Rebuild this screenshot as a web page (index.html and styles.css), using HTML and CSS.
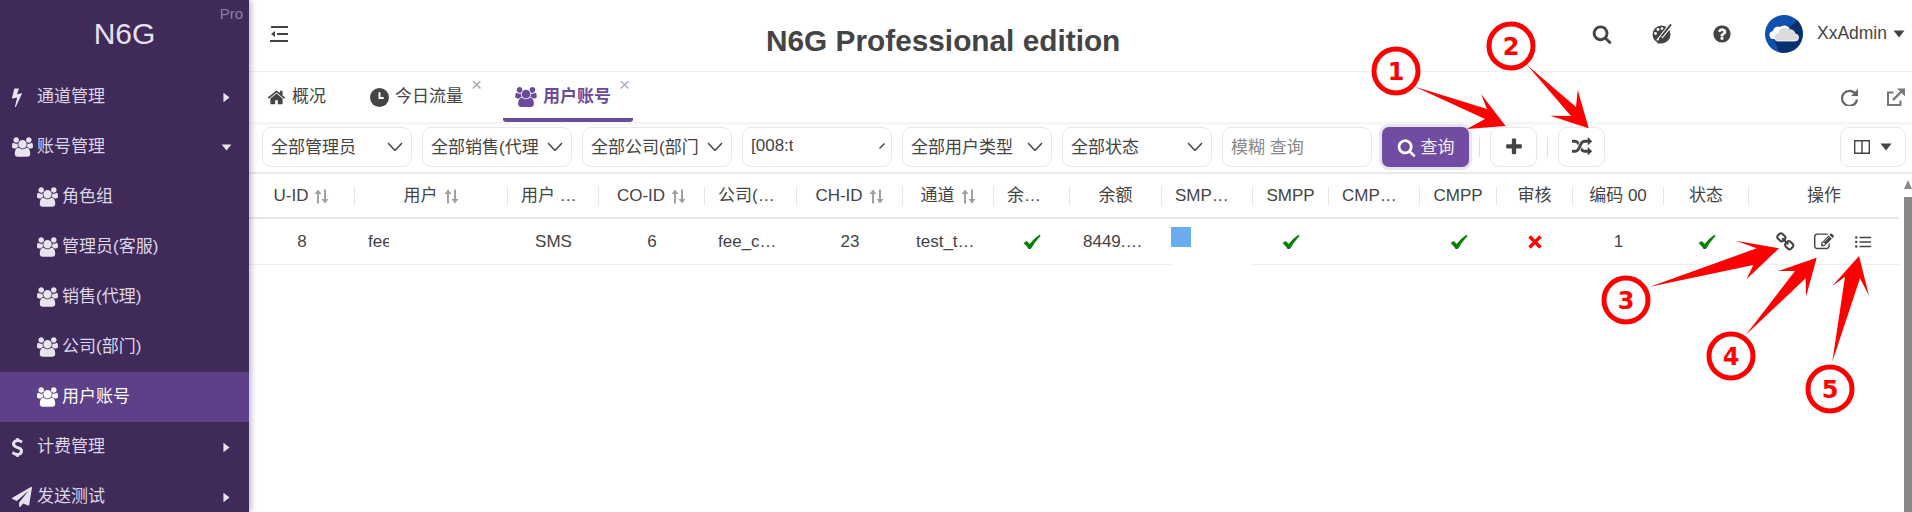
FILE: index.html
```html
<!DOCTYPE html>
<html lang="zh">
<head>
    <meta charset="utf-8" />
    <title>N6G Professional edition</title>
    <link rel="stylesheet" href="styles.css">
</head>
<body>
    <!--图标-->
    <svg class="defs" width="0" height="0">
        <symbol id="i-users" viewBox="0 0 1920 1792"><path d="M593 896q-162 5-265 128h-134q-82 0-138-40.5t-56-118.5q0-353 124-353 6 0 43.5 21t97.5 42.5 119 21.5q67 0 133-23-5 37-5 66 0 139 81 256zm1071 637q0 120-73 189.5t-194 69.5h-874q-121 0-194-69.5t-73-189.5q0-53 3.5-103.5t14-109 26.5-108.5 43-97.5 62-81 85.5-53.5 111.5-20q10 0 43 21.5t73 48 107 48 135 21.5 135-21.5 107-48 73-48 43-21.5q61 0 111.5 20t85.5 53.5 62 81 43 97.5 26.5 108.5 14 109 3.5 103.5zm-1024-1277q0 106-75 181t-181 75-181-75-75-181 75-181 181-75 181 75 75 181zm704 384q0 159-112.5 271.5t-271.5 112.5-271.5-112.5-112.5-271.5 112.5-271.5 271.5-112.5 271.5 112.5 112.5 271.5zm576 225q0 78-56 118.5t-138 40.5h-134q-103-123-265-128 81-117 81-256 0-29-5-66 66 23 133 23 59 0 119-21.5t97.5-42.5 43.5-21q124 0 124 353zm-128-609q0 106-75 181t-181 75-181-75-75-181 75-181 181-75 181 75 75 181z"/></symbol>
        <symbol id="i-check" viewBox="0 0 18 16"><path d="M0.5 9 L3.8 7 L6.6 10 Q11 4.5 16.4 0.8 L17.6 2 Q11.5 8 7.8 15 L5.6 15 Q3.5 11.5 0.5 9z"/></symbol>
        <symbol id="i-search" viewBox="0 0 1792 1792"><path d="M1216 832q0-185-131.5-316.5t-316.5-131.5-316.5 131.5-131.5 316.5 131.5 316.5 316.5 131.5 316.5-131.5 131.5-316.5zm512 832q0 52-38 90t-90 38q-54 0-90-38l-343-342q-179 124-399 124-143 0-273.5-55.5t-225-150-150-225-55.5-273.5 55.5-273.5 150-225 225-150 273.5-55.5 273.5 55.5 225 150 150 225 55.5 273.5q0 220-124 399l343 343q37 37 37 90z"/></symbol>
        <symbol id="i-sort" viewBox="0 0 15 15"><path d="M4 0.5 L7.5 5 H5 V14.5 H3 V5 H0.5z M11 14.5 L7.5 10 H10 V0.5 H12 V10 H14.5z"/></symbol>
        <symbol id="i-chevron" viewBox="0 0 16 10"><path d="M1 1 L8 8.5 L15 1" fill="none" stroke="currentColor" stroke-width="1.5"/></symbol>
        <symbol id="i-right" viewBox="0 0 8 12"><path d="M0.5 0.5 L7.5 6 L0.5 11.5z"/></symbol>
        <symbol id="i-down" viewBox="0 0 12 8"><path d="M0.5 0.5 H11.5 L6 7.5z"/></symbol>
    </svg>

    <div class="app">
        <aside class="side">
            <div class="logo">
                <span class="logo-name">N6G</span>
                <span class="logo-pro">Pro</span>
            </div>
            <ul class="menu">
                <li>
                    <svg class="ico-top ico-bolt" viewBox="0 0 896 1792"><path d="M885 566q18 20 7 44l-540 1157q-13 25-42 25-4 0-14-2-17-5-25.5-19t-4.5-30l197-808-406 101q-4 1-12 1-18 0-31-11-18-15-13-39l201-825q4-14 16-23t28-9h328q19 0 32 12.5t13 29.5q0 8-5 18l-171 463 396-98q8-2 12-2 19 0 34 15z"/></svg>
                    <span class="menu-text">通道管理</span>
                    <svg class="arrow-right"><use href="#i-right"/></svg>
                </li>
                <li>
                    <svg class="ico-top ico-users"><use href="#i-users"/></svg>
                    <span class="menu-text">账号管理</span>
                    <svg class="arrow-down"><use href="#i-down"/></svg>
                </li>
                <li class="sub"><svg class="ico-users"><use href="#i-users"/></svg><span>角色组</span></li>
                <li class="sub"><svg class="ico-users"><use href="#i-users"/></svg><span>管理员(客服)</span></li>
                <li class="sub"><svg class="ico-users"><use href="#i-users"/></svg><span>销售(代理)</span></li>
                <li class="sub"><svg class="ico-users"><use href="#i-users"/></svg><span>公司(部门)</span></li>
                <li class="sub current"><svg class="ico-users"><use href="#i-users"/></svg><span>用户账号</span></li>
                <li>
                    <svg class="ico-top ico-usd" viewBox="448 128 914 1536"><path d="M1362 1185q0 153-99.5 263.5t-258.5 136.5v175q0 14-9 23t-23 9h-135q-13 0-22.5-9.5t-9.5-22.5v-175q-66-9-127.5-31t-101.5-44.5-74-48-46.5-37.5-17.5-18q-17-21-2-41l103-135q7-10 23-12 15-2 24 9l2 2q113 99 243 125 37 8 74 8 81 0 142.5-43t61.5-122q0-28-15-53t-33.5-42-58.5-37.5-66-32-80-32.5q-39-16-61.5-25t-61.5-26.5-62.5-31-56.5-35.5-53.5-42.5-43.5-49-35.5-58-21-66.5-8.5-78q0-138 98-242t255-134v-180q0-13 9.5-22.5t22.5-9.5h135q14 0 23 9t9 23v176q57 6 110.5 23t87 33.5 63.5 37.5 39 29 15 14q17 18 5 38l-81 146q-8 15-23 16-14 3-27-7-3-3-14.5-12t-39-26.5-58.5-32-74.5-26-85.5-11.5q-95 0-155 43t-60 111q0 26 8.5 48t29.5 41.5 39.5 33 56 31 60.5 27 70 27.5q53 20 81 31.5t76 35 75.5 42.5 62 50 53 63.5 31.5 76.5 13 94z"/></svg>
                    <span class="menu-text">计费管理</span>
                    <svg class="arrow-right"><use href="#i-right"/></svg>
                </li>
                <li>
                    <svg class="ico-top ico-plane" viewBox="0 0 1792 1792"><path d="M1764 11q33 24 27 64l-256 1536q-5 29-32 45-14 8-31 8-11 0-24-5l-453-185-242 295q-18 23-49 23-13 0-22-4-19-7-30.5-23.5t-11.5-36.5v-349l864-1059-1069 925-395-162q-37-14-40-55-2-40 32-59l1664-960q15-9 32-9 20 0 36 11z"/></svg>
                    <span class="menu-text">发送测试</span>
                    <svg class="arrow-right"><use href="#i-right"/></svg>
                </li>
            </ul>
        </aside>

        <main class="main">
            <header class="top">
                <svg class="toggle" viewBox="0 0 18 16"><path d="M1 1 H18 M7 8 H18 M0 15 H18" fill="none" stroke="#444" stroke-width="2"/><path d="M1 8 L5 5 V11z" fill="#444"/></svg>
                <h1 class="title">N6G Professional edition</h1>
                <div class="top-right">
                    <svg class="top-ico"><use href="#i-search"/></svg>
                    <svg class="top-ico palette" viewBox="0 0 20 20">
                        <circle cx="9.5" cy="10.5" r="9" fill="#444"/>
                        <path d="M19.5 0 L6 17" stroke="#fff" stroke-width="4"/>
                        <path d="M19 0.5 L9.5 12.5" stroke="#444" stroke-width="2"/>
                        <path d="M8.5 12.5 C6.5 13.5 7.5 15.5 5.5 17.5 C5 19 6 19.8 7.5 19.6 C10 19 11.5 16 10.5 14z" fill="#444"/>
                        <circle cx="6" cy="5.5" r="1.4" fill="#fff"/><circle cx="3.5" cy="9.5" r="1.4" fill="#fff"/><circle cx="10" cy="4.5" r="1.3" fill="#fff"/>
                    </svg>
                    <svg class="top-ico" viewBox="0 0 1792 1792"><path d="M1024 1376v-192q0-14-9-23t-23-9h-192q-14 0-23 9t-9 23v192q0 14 9 23t23 9h192q14 0 23-9t9-23zm256-672q0-88-55.5-163t-138.5-116-170-41q-243 0-371 213-15 24 8 42l132 100q7 6 19 6 16 0 25-12 53-68 86-92 34-24 86-24 48 0 85.5 26t37.5 59q0 38-20 61t-68 45q-63 28-115.5 86.5t-52.5 125.5v36q0 14 9 23t23 9h192q14 0 23-9t9-23q0-19 21.5-49.5t54.5-49.5q32-18 49-28.5t46-35 44.5-48 28-60.5 12.5-81zm384 192q0 209-103 385.5t-279.5 279.5-385.5 103-385.5-103-279.5-279.5-103-385.5 103-385.5 279.5-279.5 385.5-103 385.5 103 279.5 279.5 103 385.5z"/></svg>
                    <svg class="avatar" viewBox="0 0 38 38">
                        <circle cx="19" cy="19" r="19" fill="#0f4fae"/>
                        <path d="M10 27 L32 5 A19 19 0 0 1 14 37z" fill="#0a2f6e"/>
                        <path d="M9 24 a4 4 0 0 1 -1 -8 a5 5 0 0 1 7 -4 a6.5 6.5 0 0 1 10 2 H18 a5.5 5.5 0 0 0 -5 5 a4 4 0 0 0 -2 5z" fill="#fff"/>
                        <path d="M14 26 a4 4 0 0 1 -1 -8 a6 6 0 0 1 11 -3 a4.5 4.5 0 0 1 6 4 a3.5 3.5 0 0 1 0 7z" fill="#dcdcdc" stroke="#fff" stroke-width="0.8"/>
                    </svg>
                    <span class="user-name">XxAdmin</span>
                    <svg class="user-caret"><use href="#i-down"/></svg>
                </div>
            </header>

            <nav class="tabs">
                <div class="tab tab-home">
                    <svg class="tab-ico" viewBox="0 0 1792 1792"><path d="M1472 992v480q0 26-19 45t-45 19h-384v-384h-256v384h-384q-26 0-45-19t-19-45v-480q0-1 .5-3t.5-3l575-474 575 474q1 2 1 6zm223-69l-62 74q-8 9-21 11h-3q-13 0-21-7l-692-577-692 577q-12 8-24 7-13-2-21-11l-62-74q-8-10-7-23.5t11-21.5l719-599q32-26 76-26t76 26l244 204v-195q0-14 9-23t23-9h192q14 0 23 9t9 23v408l219 182q10 8 11 21.5t-7 23.5z"/></svg>
                    <span>概况</span>
                </div>
                <div class="tab tab-flow">
                    <svg class="tab-ico" viewBox="0 0 18 18"><circle cx="9" cy="9" r="9"/><path d="M9 4 V9.5 H13" fill="none" stroke="#fff" stroke-width="1.8"/></svg>
                    <span>今日流量</span>
                    <span class="tab-close">×</span>
                </div>
                <div class="tab tab-user">
                    <svg class="tab-ico-users"><use href="#i-users"/></svg>
                    <span>用户账号</span>
                    <span class="tab-close">×</span>
                </div>
                <div class="tab-tools">
                    <svg viewBox="0 0 18 18"><path d="M15 6.5 A7.5 7.5 0 1 0 16 11.5" fill="none" stroke="#666" stroke-width="2.2"/><path d="M17 1 V8 H10z" fill="#666"/></svg>
                    <svg viewBox="0 0 18 18"><path d="M6.5 4.5 H1 V17 H13.5 V12.5" fill="none" stroke="#777" stroke-width="2"/><path d="M6 12 L14 4" stroke="#777" stroke-width="2.4"/><path d="M10 0.5 H18 V8.5z" fill="#777"/></svg>
                </div>
            </nav>

            <div class="bar">
                <div class="sel"><span class="sel-text">全部管理员</span><svg><use href="#i-chevron"/></svg></div>
                <div class="sel"><span class="sel-text">全部销售(代理)</span><svg><use href="#i-chevron"/></svg></div>
                <div class="sel"><span class="sel-text">全部公司(部门)</span><svg><use href="#i-chevron"/></svg></div>
                <div class="sel sel-date"><span class="sel-text">[008:test_user]</span><svg class="sel-tick" viewBox="0 0 6 6"><path d="M0.5 5.5 L5.5 0.5" stroke="#444" stroke-width="1.4"/></svg></div>
                <div class="sel"><span class="sel-text">全部用户类型</span><svg><use href="#i-chevron"/></svg></div>
                <div class="sel"><span class="sel-text">全部状态</span><svg><use href="#i-chevron"/></svg></div>
                <div class="sel sel-input"><span>模糊 查询</span></div>
                <div class="btn-query"><svg><use href="#i-search"/></svg><span>查询</span></div>
                <i class="bar-line"></i>
                <div class="btn-ico"><svg viewBox="0 0 1792 1792"><path d="M1600 736v192q0 40-28 68t-68 28h-416v416q0 40-28 68t-68 28h-192q-40 0-68-28t-28-68v-416h-416q-40 0-68-28t-28-68v-192q0-40 28-68t68-28h416v-416q0-40 28-68t68-28h192q40 0 68 28t28 68v416h416q40 0 68 28t28 68z"/></svg></div>
                <i class="bar-line"></i>
                <div class="btn-ico"><svg viewBox="0 0 1792 1792"><path d="M666 481q-60 92-137 273-22-45-37-72.5t-40.5-63.5-51-56.5-63-35-81.5-14.5h-224q-14 0-23-9t-9-23v-192q0-14 9-23t23-9h224q250 0 410 225zm1126 799q0 14-9 23l-320 320q-9 9-23 9-13 0-22.5-9.5t-9.5-22.5v-192q-32 0-85 .5t-81 1-73-1-71-5-64-10.5-63-18.5-58-28.5-59-40-55-53.5-56-69.5q59-93 136-273 22 45 37 72.5t40.5 63.5 51 56.5 63 35 81.5 14.5h256v-192q0-14 9-23t23-9q12 0 24 10l319 319q9 9 9 23zm0-896q0 14-9 23l-320 320q-9 9-23 9-13 0-22.5-9.5t-9.5-22.5v-192h-256q-48 0-87 15t-69 45-51 61.5-45 77.5q-32 62-78 171-29 66-49.5 111t-54 105-64 100-74 83-90 68.5-106.5 42-128 16.5h-224q-14 0-23-9t-9-23v-192q0-14 9-23t23-9h224q48 0 87-15t69-45 51-61.5 45-77.5q32-62 78-171 29-66 49.5-111t54-105 64-100 74-83 90-68.5 106.5-42 128-16.5h256v-192q0-14 9-23t23-9q12 0 24 10l319 319q9 9 9 23z"/></svg></div>
                <div class="btn-cols">
                    <svg viewBox="0 0 16 14"><path d="M0.7 0.7 H15.3 V13.3 H0.7z M8 0.7 V13.3" fill="none" stroke="#444" stroke-width="1.4"/></svg>
                    <svg class="cols-caret"><use href="#i-down"/></svg>
                </div>
            </div>

            <div class="list">
                <div class="grid-wrap">
                    <div class="row head">
                        <div class="th sorted"><span>U-ID</span><svg><use href="#i-sort"/></svg></div>
                        <div class="th sorted"><span>用户</span><svg><use href="#i-sort"/></svg></div>
                        <div class="th"><span>用户 类型</span></div>
                        <div class="th sorted"><span>CO-ID</span><svg><use href="#i-sort"/></svg></div>
                        <div class="th"><span>公司(部门)</span></div>
                        <div class="th sorted"><span>CH-ID</span><svg><use href="#i-sort"/></svg></div>
                        <div class="th sorted"><span>通道</span><svg><use href="#i-sort"/></svg></div>
                        <div class="th"><span>余额告警</span></div>
                        <div class="th"><span>余额</span></div>
                        <div class="th"><span>SMPP 颜色</span></div>
                        <div class="th"><span>SMPP</span></div>
                        <div class="th"><span>CMPP 颜色</span></div>
                        <div class="th"><span>CMPP</span></div>
                        <div class="th"><span>审核</span></div>
                        <div class="th"><span>编码 00</span></div>
                        <div class="th"><span>状态</span></div>
                        <div class="th"><span>操作</span></div>
                    </div>
                    <div class="row body">
                        <div class="td">8</div>
                        <div class="td td-left"><span class="clip">fee_user</span></div>
                        <div class="td">SMS</div>
                        <div class="td">6</div>
                        <div class="td"><span class="dots">fee_company</span></div>
                        <div class="td">23</div>
                        <div class="td"><span class="dots">test_tunnel</span></div>
                        <div class="td"><svg class="ok"><use href="#i-check"/></svg></div>
                        <div class="td"><span class="dots">8449.1234</span></div>
                        <div class="td td-color"><div class="color-box"><i class="color"></i></div></div>
                        <div class="td"><svg class="ok"><use href="#i-check"/></svg></div>
                        <div class="td"></div>
                        <div class="td"><svg class="ok"><use href="#i-check"/></svg></div>
                        <div class="td"><svg class="no" viewBox="0 0 14 14"><path d="M1.5 1.5 L12.5 12.5 M12.5 1.5 L1.5 12.5" stroke="#f00" stroke-width="3.2"/></svg></div>
                        <div class="td">1</div>
                        <div class="td"><svg class="ok"><use href="#i-check"/></svg></div>
                        <div class="td td-ops">
                            <svg viewBox="0 0 1792 1792"><path d="M1456 1216q0-40-28-68l-208-208q-28-28-68-28-42 0-72 32 3 3 19 18.5t21.5 21.5 15 19 13 25.5 3.5 27.5q0 40-28 68t-68 28q-15 0-27.5-3.5t-25.5-13-19-15-21.5-21.5-18.5-19q-33 31-33 73 0 40 28 68l206 207q27 27 68 27 40 0 68-26l147-146q28-28 28-67zm-703-705q0-40-28-68l-206-207q-28-28-68-28-39 0-68 27l-147 146q-28 28-28 67 0 40 28 68l208 208q27 27 68 27 42 0 72-31-3-3-19-18.5t-21.5-21.5-15-19-13-25.5-3.5-27.5q0-40 28-68t68-28q15 0 27.5 3.5t25.5 13 19 15 21.5 21.5 18.5 19q33-31 33-73zm895 705q0 120-85 203l-147 146q-83 83-203 83-121 0-204-85l-206-207q-83-83-83-203 0-123 88-209l-88-88q-86 88-208 88-120 0-204-84l-208-208q-84-84-84-204t85-203l147-146q83-83 203-83 121 0 204 85l206 207q83 83 83 203 0 123-88 209l88 88q86-88 208-88 120 0 204 84l208 208q84 84 84 204z"/></svg>
                            <svg viewBox="0 0 1792 1792"><path d="M888 1184l116-116-152-152-116 116v56h96v96h56zm440-720q-16-16-33 1l-350 350q-17 17-1 33t33-1l350-350q17-17 1-33zm80 594v190q0 119-84.5 203.5t-203.5 84.5h-832q-119 0-203.5-84.5t-84.5-203.5v-832q0-119 84.5-203.5t203.5-84.5h832q63 0 117 25 15 7 18 23 3 17-9 29l-49 49q-14 14-32 8-23-6-45-6h-832q-66 0-113 47t-47 113v832q0 66 47 113t113 47h832q66 0 113-47t47-113v-126q0-13 9-22l64-64q15-15 35-7t20 29zm-96-738l288 288-672 672h-288v-288zm444 132l-92 92-288-288 92-92q28-28 68-28t68 28l152 152q28 28 28 68t-28 68z"/></svg>
                            <svg viewBox="0 0 16 12"><path d="M4.5 1.5 H16 M4.5 6 H16 M4.5 10.5 H16" stroke="#444" stroke-width="1.4"/><circle cx="1.2" cy="1.5" r="1.2" fill="#444"/><circle cx="1.2" cy="6" r="1.2" fill="#444"/><circle cx="1.2" cy="10.5" r="1.2" fill="#444"/></svg>
                        </div>
                    </div>
                </div>
                <div class="scroll">
                    <i class="scroll-up"></i>
                    <i class="scroll-thumb"></i>
                </div>
            </div>
        </main>
    </div>

    <!--标注-->
    <svg class="marks" viewBox="0 0 1912 512">
        <g class="mark-arrow">
            <polygon points="1415,86.7 1487,109 1481,94 1505.7,126 1466.7,129 1485,119"/>
            <polygon points="1527,65 1576,107 1577.7,90 1588.7,128.3 1550.3,115.7 1571,116"/>
            <polygon points="1650,286.7 1756.7,248.3 1735.7,240.7 1779,248.3 1746.7,279 1753.3,265"/>
            <polygon points="1745.7,335 1795,271 1778.3,271 1816.7,257.7 1806,296.7 1805.7,278.3"/>
            <polygon points="1832.3,361.7 1845,276.7 1832.3,286 1859,256 1869,295.7 1860,278.3"/>
        </g>
        <g class="mark-ring">
            <circle cx="1396" cy="71" r="22"/>
            <circle cx="1511" cy="46" r="22"/>
            <circle cx="1626" cy="300" r="22"/>
            <circle cx="1731" cy="356" r="22"/>
            <circle cx="1830" cy="389" r="22"/>
        </g>
        <g class="mark-num">
            <text x="1396" y="80">1</text>
            <text x="1511" y="55">2</text>
            <text x="1626" y="309">3</text>
            <text x="1731" y="365">4</text>
            <text x="1830" y="398">5</text>
        </g>
    </svg>
</body>
</html>
```
FILE: styles.css
```css
* {
    margin: 0;
    padding: 0;
    box-sizing: border-box;
}

ul {
    list-style: none;
}

html, body {
    width: 1912px;
    height: 512px;
    overflow: hidden;
}

body {
    position: relative;
    background-color: #fff;
    color: #444;
    font-family: "Liberation Sans", "Noto Sans CJK SC", sans-serif;
    font-size: 17px;
}

.defs {
    display: block;
    height: 0;
}

.app {
    display: flex;
    height: 512px;
}

/* 左侧菜单 */
.side {
    flex: none;
    width: 249px;
    height: 512px;
    overflow: hidden;
    background-color: #3f2a5a;
    color: #dcd6e6;
    box-shadow: 2px 0 6px rgba(63, 42, 90, .35);
    position: relative;
    z-index: 2;
}

.logo {
    display: flex;
    height: 72px;
    justify-content: center;
    padding-top: 17px;
    position: relative;
}

.logo-name {
    font-size: 30px;
    line-height: 34px;
    color: #e6e2ee;
}

.logo-pro {
    position: absolute;
    top: 5px;
    right: 6px;
    font-size: 15px;
    line-height: 18px;
    color: #8d7ea3;
}

.menu li {
    display: flex;
    align-items: center;
    height: 50px;
    padding-left: 12px;
    fill: #e8e4ef;
}

.menu li span {
    margin-bottom: 5px;
}

.menu li.sub {
    padding-left: 37px;
}

.menu li.current {
    background-color: #5e4088;
    color: #fff;
    fill: #fff;
}

.ico-top {
    flex: none;
}

.ico-users {
    flex: none;
    width: 21px;
    height: 20px;
    margin-right: 4px;
}

.ico-top.ico-users {
    margin-right: 4px;
}

.ico-bolt {
    width: 10px;
    height: 20px;
    margin-right: 15px;
}

.ico-usd {
    width: 11px;
    height: 19px;
    margin-right: 14px;
}

.ico-plane {
    width: 20px;
    height: 20px;
    margin-right: 5px;
}

.menu-text {
    flex: 1;
}

.arrow-right {
    flex: none;
    width: 7px;
    height: 11px;
    margin-right: 19px;
}

.arrow-down {
    flex: none;
    width: 11px;
    height: 7px;
    margin-right: 17px;
}

/* 右侧 */
.main {
    flex: 1;
    min-width: 0;
    display: flex;
    flex-direction: column;
}

.top {
    flex: none;
    display: flex;
    align-items: center;
    height: 72px;
    border-bottom: 1px solid #eee;
    padding-left: 21px;
    position: relative;
}

.toggle {
    width: 18px;
    height: 16px;
    margin-top: -4px;
}

.title {
    flex: 1;
    margin-left: 478px;
    font-size: 29.8px;
    line-height: 34px;
    margin-top: 11px;
    color: #444;
}

.top-right {
    display: flex;
    align-items: center;
    margin-top: -4px;
    fill: #444;
}

.top-ico {
    width: 20px;
    height: 20px;
    margin-right: 40px;
}

.avatar {
    width: 38px;
    height: 38px;
    margin-left: -7px;
    margin-right: 14px;
}

.user-name {
    margin-right: 6px;
    font-size: 17.5px;
}

.user-caret {
    width: 12px;
    height: 8px;
    margin-right: 7px;
}

/* 标签 */
.tabs {
    flex: none;
    display: flex;
    height: 50px;
    font-size: 17px;
    fill: #444;
}

.tab {
    display: flex;
    align-items: center;
    position: relative;
    height: 50px;
    padding-bottom: 0;
}

.tab span {
    margin-bottom: 5px;
}

.tab-ico {
    width: 19px;
    height: 19px;
    margin-right: 6px;
}

.tab-home {
    margin-left: 18px;
    width: 103px;
}

.tab-flow {
    width: 133px;
}

.tab-user {
    width: 130px;
    padding-left: 12px;
    color: #6a4a9c;
    fill: #6a4a9c;
    font-weight: bold;
    border-bottom: 4px solid #6a4a9c;
    border-radius: 0 0 3px 3px;
    padding-top: 4px;
}

.tab-ico-users {
    width: 22px;
    height: 20px;
    margin-right: 6px;
}

.tab-close {
    position: absolute;
    top: 5px;
    right: 21px;
    font-size: 19px;
    line-height: 16px;
    font-weight: normal;
    color: #aaa;
}

.tab-user .tab-close {
    right: 3px;
    color: #b9a8d2;
}

.tab-tools {
    display: flex;
    align-items: center;
    gap: 28px;
    margin-left: auto;
    margin-right: 7px;
}

.tab-tools svg {
    width: 18px;
    height: 18px;
}

/* 工具条 */
.bar {
    flex: none;
    display: flex;
    align-items: center;
    gap: 10px;
    height: 52px;
    padding: 0 6px 0 13px;
    border-bottom: 2px solid #eaeaea;
    background: linear-gradient(#f4f4f4, #fff 5px);
    position: relative;
}

.sel {
    flex: none;
    display: flex;
    align-items: center;
    width: 150px;
    height: 40px;
    padding: 0 8px;
    background-color: #fff;
    border: 1px solid #e8e8e8;
    border-radius: 9px;
}

.sel svg {
    flex: none;
    width: 16px;
    height: 10px;
    color: #444;
    margin-left: 9px;
}

.sel-text {
    flex: 1;
    min-width: 0;
    white-space: nowrap;
    overflow: hidden;
    margin-bottom: 3px;
}

.sel-date .sel-text {
    flex: none;
    width: 42px;
}

.sel-date svg.sel-tick {
    width: 6px;
    height: 6px;
    margin-left: 86px;
    margin-top: -2px;
}

.sel-input {
    color: #888;
}

.sel-input span {
    margin-bottom: 3px;
}

.btn-query {
    flex: none;
    display: flex;
    align-items: center;
    justify-content: center;
    width: 87px;
    height: 40px;
    background-color: #714ca3;
    border-radius: 7px;
    box-shadow: 0 0 0 3px #e9e4f2;
    color: #f3effa;
    fill: #fff;
}

.btn-query span {
    margin-bottom: 3px;
}

.btn-query svg {
    width: 19px;
    height: 19px;
    margin-right: 5px;
}

.bar-line {
    flex: none;
    width: 1px;
    height: 20px;
    background-color: #ddd;
}

.btn-ico {
    flex: none;
    display: flex;
    align-items: center;
    justify-content: center;
    width: 47px;
    height: 40px;
    border: 1px solid #e8e8e8;
    border-radius: 9px;
    background-color: #fff;
    fill: #444;
}

.btn-ico svg {
    width: 20px;
    height: 20px;
}

.btn-cols {
    flex: none;
    display: flex;
    align-items: center;
    justify-content: center;
    gap: 10px;
    width: 66px;
    height: 40px;
    margin-left: auto;
    border: 1px solid #e8e8e8;
    border-radius: 9px;
    fill: #444;
}

.btn-cols svg {
    width: 16px;
    height: 14px;
}

.btn-cols svg.cols-caret {
    width: 12px;
    height: 8px;
}

/* 表格 */
.list {
    flex: 1;
    display: flex;
    min-height: 0;
}

.grid-wrap {
    flex: none;
    width: 1650px;
    margin-right: 5px;
}

.row {
    display: grid;
    grid-template-columns: 106px 153px 91px 106px 92px 106px 91px 76px 92px 91px 76px 91px 77px 76px 91px 85px 150px;
    align-items: center;
}

.head {
    height: 45px;
    border-bottom: 2px solid #e8e8e8;
}

.th {
    display: flex;
    justify-content: center;
    height: 20px;
    line-height: 20px;
    padding: 0 13px;
    border-right: 1px solid #e6e6e6;
    min-width: 0;
}

.th:last-child {
    border-right: 0;
}

.th span {
    min-width: 0;
    white-space: nowrap;
    overflow: hidden;
    text-overflow: ellipsis;
}

.th.sorted span {
    flex: none;
}

.th svg {
    flex: none;
    width: 15px;
    height: 15px;
    margin: 3px 0 0 6px;
    fill: #a0a0a0;
}

.body {
    height: 46px;
    align-items: stretch;
}

.td {
    display: flex;
    align-items: center;
    justify-content: center;
    padding: 0 13px;
    border-bottom: 1px solid #eee;
    min-width: 0;
}

.td-left {
    justify-content: flex-start;
}

.clip {
    display: block;
    width: 21px;
    overflow: hidden;
    white-space: nowrap;
}

.dots {
    min-width: 0;
    overflow: hidden;
    white-space: nowrap;
    text-overflow: ellipsis;
}

.ok {
    width: 18px;
    height: 16px;
    fill: #068006;
}

.no {
    width: 14px;
    height: 14px;
}

.td-color {
    padding: 0 0 0 9px;
    align-items: flex-start;
    justify-content: flex-start;
}

.color-box {
    width: 82px;
    height: 46px;
    margin-bottom: -1px;
    padding-top: 8px;
    background-color: #fff;
    position: relative;
}

.color {
    display: block;
    width: 20px;
    height: 20px;
    background-color: #6aaced;
}

.td-ops {
    justify-content: flex-start;
    padding: 0 0 0 27px;
    gap: 18px;
    fill: #444;
}

.td-ops svg {
    flex: none;
    width: 20px;
    height: 20px;
}

.td-ops svg:last-child {
    width: 16px;
    height: 12px;
    margin-left: 3px;
}

.scroll {
    flex: none;
    width: 8px;
    padding-top: 6px;
}

.scroll-up {
    display: block;
    width: 0;
    height: 0;
    border-left: 4px solid transparent;
    border-right: 4px solid transparent;
    border-bottom: 9px solid #888;
}

.scroll-thumb {
    display: block;
    height: 315px;
    margin-top: 8px;
    background-color: #888;
}

/* 红色标注 */
.marks {
    position: absolute;
    top: 0;
    left: 0;
    width: 1912px;
    height: 512px;
    z-index: 5;
    pointer-events: none;
}

.mark-arrow {
    fill: #f00;
}

.mark-ring circle {
    fill: #fff;
    stroke: #f00;
    stroke-width: 5;
}

.mark-num {
    fill: #f00;
    font-family: "DejaVu Sans", sans-serif;
    font-weight: bold;
    font-size: 24px;
    text-anchor: middle;
}
```
